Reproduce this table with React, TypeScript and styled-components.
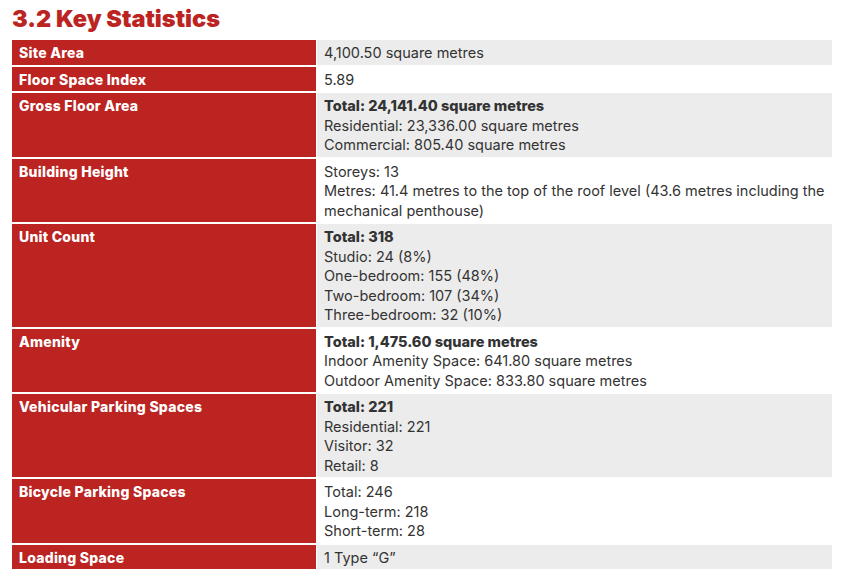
import React from "react";
import styled, { createGlobalStyle } from "styled-components";

const Global = createGlobalStyle`
  html, body { margin: 0; padding: 0; background: #fff; }
  body { font-family: "Inter", sans-serif; }
`;

const Page = styled.div`
  padding: 5px 33px 0 12px;
  width: 865px;
  box-sizing: border-box;
`;

const Heading = styled.h2`
  margin: 0 0 7px 0;
  font-family: "Inter", sans-serif;
  font-weight: 900;
  font-size: 23.5px;
  line-height: 28px;
  color: #bb2421;
  letter-spacing: 0px;
`;

const Table = styled.div`
  display: grid;
  grid-template-columns: 304px 1fr;
  column-gap: 1px;
  row-gap: 2px;
`;

const Label = styled.div`
  background: #bb2421;
  color: #fff;
  font-family: "Inter", sans-serif;
  font-weight: 800;
  font-size: 14px;
  line-height: 19.5px;
  padding: 3px 7px 2px 7px;
  letter-spacing: 0.25px;
`;

const Value = styled.div<{ $shaded: boolean }>`
  background: ${(p) => (p.$shaded ? "#ececec" : "#fff")};
  color: #333;
  font-family: "Inter", sans-serif;
  font-size: 14.5px;
  line-height: 19.5px;
  padding: 3px 6px 2px 7px;
`;

const Line = styled.div<{ $bold?: boolean }>`
  font-weight: ${(p) => (p.$bold ? 800 : 400)};
`;

type Row = { label: string; lines: { text: string; bold?: boolean }[] };

const rows: Row[] = [
  { label: "Site Area", lines: [{ text: "4,100.50 square metres" }] },
  { label: "Floor Space Index", lines: [{ text: "5.89" }] },
  {
    label: "Gross Floor Area",
    lines: [
      { text: "Total: 24,141.40 square metres", bold: true },
      { text: "Residential: 23,336.00 square metres" },
      { text: "Commercial: 805.40 square metres" },
    ],
  },
  {
    label: "Building Height",
    lines: [
      { text: "Storeys: 13" },
      {
        text: "Metres: 41.4 metres to the top of the roof level (43.6 metres including the mechanical penthouse)",
      },
    ],
  },
  {
    label: "Unit Count",
    lines: [
      { text: "Total: 318", bold: true },
      { text: "Studio: 24 (8%)" },
      { text: "One-bedroom: 155 (48%)" },
      { text: "Two-bedroom: 107 (34%)" },
      { text: "Three-bedroom: 32 (10%)" },
    ],
  },
  {
    label: "Amenity",
    lines: [
      { text: "Total: 1,475.60 square metres", bold: true },
      { text: "Indoor Amenity Space: 641.80 square metres" },
      { text: "Outdoor Amenity Space: 833.80 square metres" },
    ],
  },
  {
    label: "Vehicular Parking Spaces",
    lines: [
      { text: "Total: 221", bold: true },
      { text: "Residential: 221" },
      { text: "Visitor: 32" },
      { text: "Retail: 8" },
    ],
  },
  {
    label: "Bicycle Parking Spaces",
    lines: [
      { text: "Total: 246" },
      { text: "Long-term: 218" },
      { text: "Short-term: 28" },
    ],
  },
  { label: "Loading Space", lines: [{ text: "1 Type \u201CG\u201D" }] },
];

export default function App() {
  return (
    <>
      <Global />
      <Page>
        <Heading>3.2 Key Statistics</Heading>
        <Table>
          {rows.map((r, i) => (
            <React.Fragment key={r.label}>
              <Label>{r.label}</Label>
              <Value $shaded={i % 2 === 0}>
                {r.lines.map((l, j) => (
                  <Line key={j} $bold={l.bold}>
                    {l.text}
                  </Line>
                ))}
              </Value>
            </React.Fragment>
          ))}
        </Table>
      </Page>
    </>
  );
}
